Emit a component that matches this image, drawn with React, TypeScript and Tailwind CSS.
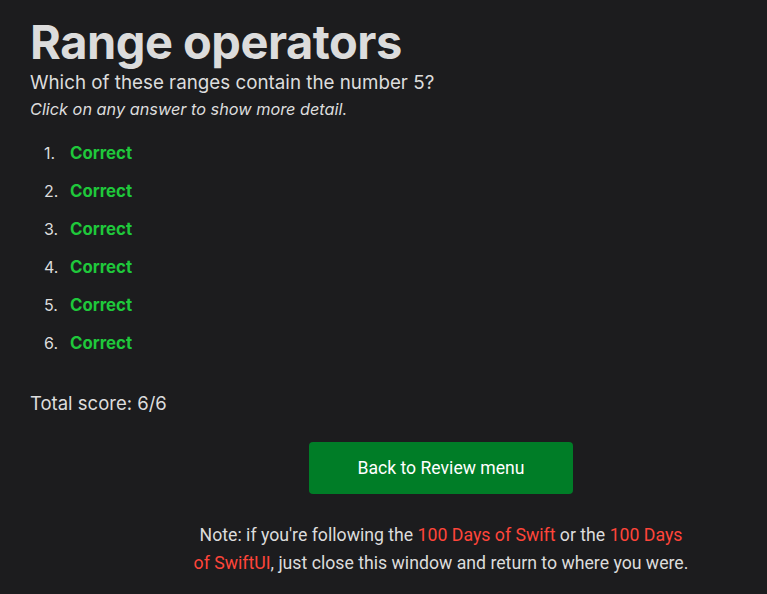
import React from 'react';

const answers = [1, 2, 3, 4, 5, 6];

export default function App() {
  return (
    <div className="h-[594px] w-[767px] overflow-hidden bg-[#1c1c1e] text-[#dddddd] font-['Inter',sans-serif]">
      <div className="w-[852px] pl-[30px] pt-[14px]">
        <h1 className="text-[47px] font-bold leading-[56px] tracking-[-0.5px] text-[#dcdcdc]">Range operators</h1>
        <p className="mt-[1px] text-[18.8px] leading-[24px]">Which of these ranges contain the number 5?</p>
        <p className="mt-[3px] text-[16.3px] italic leading-[22px]">Click on any answer to show more detail.</p>

        <ol className="mt-[22px] flex flex-col gap-[16px] pl-[14px] text-[16px] leading-[22px]">
          {answers.map((n) => (
            <li key={n} className="flex">
              <span className="w-[26px]">{n}.</span>
              <span className="text-[16.8px] font-bold text-[#1fc83b]">Correct</span>
            </li>
          ))}
        </ol>

        <p className="mt-[37px] text-[18.5px] leading-[24px]">Total score: 6/6</p>

        <div className="mt-[27px] flex flex-col items-center">
          <button className="h-[52px] w-[264px] rounded-[4px] bg-[#007d27] font-['Roboto',sans-serif] text-[17.6px] text-white">
            Back to Review menu
          </button>
          <p className="mt-[27px] w-[500px] text-center font-['Roboto',sans-serif] text-[17.7px] leading-[28px] text-[#dcdcdc]">
            Note: if you're following the <span className="text-[#ff453a]">100 Days of Swift</span> or the{' '}
            <span className="text-[#ff453a]">100 Days of SwiftUI</span>, just close this window and return to where you were.
          </p>
        </div>
      </div>
    </div>
  );
}
